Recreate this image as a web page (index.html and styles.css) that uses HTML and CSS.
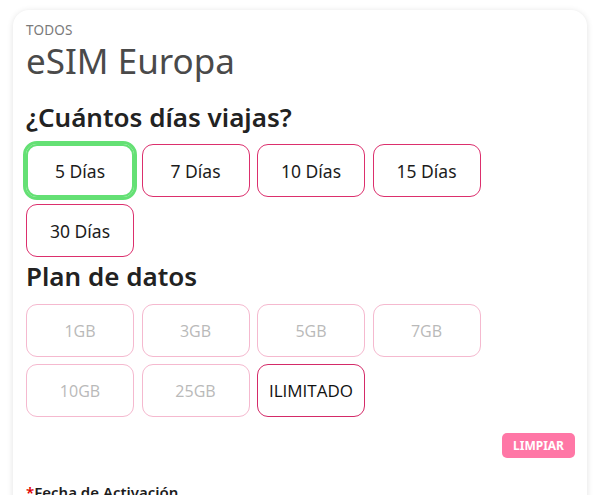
FILE: index.html
```html
<!DOCTYPE html>
<html lang="es">
<head>
<meta charset="utf-8">
<title>eSIM Europa</title>
<link rel="stylesheet" href="styles.css">
</head>
<body>
<div class="card">
  <div class="category">TODOS</div>
  <h1 class="title">eSIM Europa</h1>
  <h2 class="section">¿Cuántos días viajas?</h2>
  <div class="options">
    <button class="opt days selected">5 Días</button>
    <button class="opt days">7 Días</button>
    <button class="opt days">10 Días</button>
    <button class="opt days">15 Días</button>
    <button class="opt days">30 Días</button>
  </div>
  <h2 class="section section-data">Plan de datos</h2>
  <div class="options">
    <button class="opt data disabled">1GB</button>
    <button class="opt data disabled">3GB</button>
    <button class="opt data disabled">5GB</button>
    <button class="opt data disabled">7GB</button>
    <button class="opt data disabled">10GB</button>
    <button class="opt data disabled">25GB</button>
    <button class="opt data active">ILIMITADO</button>
  </div>
  <div class="actions">
    <button class="clear">LIMPIAR</button>
  </div>
  <div class="field-label"><span class="req">*</span>Fecha de Activación</div>
</div>
</body>
</html>
```

FILE: styles.css
```css
html, body {
  margin: 0;
  padding: 0;
  background: #ffffff;
}
body {
  padding: 10px 20px 0 13px;
  font-family: "Noto Sans", "Open Sans", sans-serif;
  overflow: hidden;
  height: 495px;
  box-sizing: border-box;
}
.card {
  background: #fff;
  border-radius: 16px;
  box-shadow: 0 1px 6px rgba(0, 0, 0, 0.12);
  padding: 11px 12px 40px 13px;
  width: 574px;
  box-sizing: border-box;
}
.category {
  font-size: 13.5px;
  color: #7a7a7a;
  line-height: 18px;
  letter-spacing: 0.2px;
}
.title {
  margin: 0;
  font-weight: 400;
  font-size: 35px;
  line-height: 44px;
  color: #4a4a4a;
}
.section {
  margin: 17px 0 0;
  font-weight: 600;
  font-size: 26px;
  line-height: 34px;
  color: #222;
}
.section-data {
  margin-top: 2px;
}
.options {
  display: flex;
  flex-wrap: wrap;
  gap: 7px 7.5px;
  margin-top: 10px;
}
.section-data + .options {
  margin-top: 11px;
}
.opt {
  width: 108px;
  height: 53px;
  border-radius: 11px;
  background: #fff;
  font-family: "Noto Sans", sans-serif;
  font-size: 17.5px;
  box-sizing: border-box;
  padding: 0;
  margin: 0;
}
.days {
  border: 1.5px solid #dc2f6d;
  color: #1c1c1c;
}
.days.selected {
  border: 2px solid #64e074;
  outline: 3px solid #64e074;
  outline-offset: 0;
}
.data.disabled {
  border: 1.5px solid #f5b9cf;
  color: #b9b9b9;
  font-family: "Open Sans", sans-serif;
  font-size: 16px;
}
.data.active {
  border: 1.5px solid #d42a68;
  color: #111;
  font-family: "Open Sans", sans-serif;
  font-size: 17px;
}
.actions {
  display: flex;
  justify-content: flex-end;
  margin-top: 16px;
}
.clear {
  background: #ff77a6;
  color: #fff;
  border: none;
  border-radius: 5px;
  width: 73px;
  height: 25px;
  font-family: "Noto Sans", sans-serif;
  font-weight: 700;
  font-size: 12px;
  padding: 0;
}
.field-label {
  margin-top: 24px;
  font-size: 15px;
  font-weight: 600;
  color: #1c1c1c;
}
.req {
  color: #e00000;
}
```
